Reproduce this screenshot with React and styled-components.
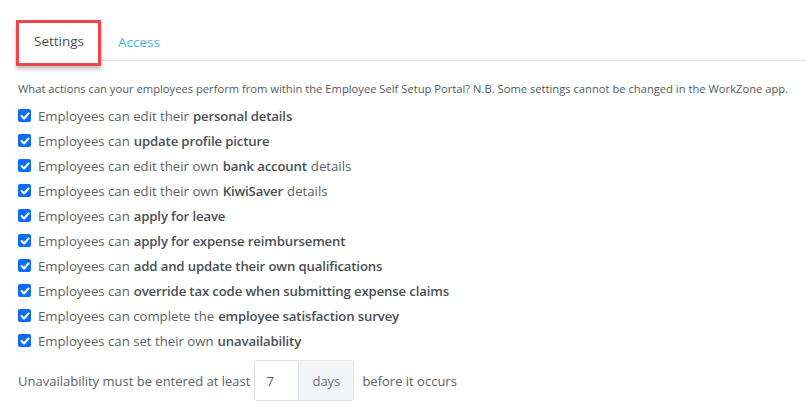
import React from "react";
import styled, { createGlobalStyle } from "styled-components";

const Global = createGlobalStyle`
  body {
    margin: 0;
    background: #ffffff;
    font-family: "Open Sans", "Liberation Sans", sans-serif;
    color: #555a60;
  }
`;

const Page = styled.div`
  padding: 22px 0 0 18px;
`;

const Tabs = styled.div`
  display: flex;
  align-items: flex-end;
  height: 38px;
  border-bottom: 1px solid #dcdcdc;
  position: relative;
`;

const Tab = styled.div`
  position: relative;
  padding: 0 ${(p) => (p.active ? "16px" : "17px")};
  height: 38px;
  display: flex;
  align-items: center;
  font-size: 13.5px;
  color: ${(p) => (p.active ? "#4a4f55" : "#3fb0e6")};
  background: ${(p) => (p.active ? "#fff" : "transparent")};
  margin-bottom: -1px;
  margin-left: ${(p) => (p.active ? "0" : "1px")};
  ${(p) => (p.active ? "border-bottom: 1px solid #fff;" : "")}
`;

const Highlight = styled.div`
  position: absolute;
  left: -2px;
  top: -2px;
  width: 79px;
  height: 40px;
  border: 3px solid #f2454b;
  box-shadow: 0 3px 4px rgba(0, 0, 0, 0.25);
  pointer-events: none;
`;

const Intro = styled.p`
  margin: 20px 0 7px;
  font-size: 11.2px;
  color: #555a60;
  white-space: nowrap;
`;

const List = styled.div`
  display: flex;
  flex-direction: column;
`;

const Row = styled.label`
  display: flex;
  align-items: center;
  height: 25px;
  font-size: 13.2px;
  color: #5c6166;
  white-space: nowrap;
`;

const Box = styled.span`
  width: 13px;
  height: 13px;
  border-radius: 2px;
  background: #0b6cf5;
  display: flex;
  align-items: center;
  justify-content: center;
  margin-right: 7px;
  flex-shrink: 0;
`;

const B = styled.b`
  font-weight: 600;
  color: #4a4f55;
  margin-left: 4px;
  letter-spacing: -0.15px;
`;

const DaysRow = styled.div`
  display: flex;
  align-items: center;
  margin-top: 7px;
  font-size: 13px;
  color: #5c6166;
`;

const Group = styled.div`
  display: flex;
  height: 39px;
  margin: 0 8px 0 4px;
  border: 1px solid #dfe2e6;
  border-radius: 3px;
  overflow: hidden;
`;

const NumInput = styled.div`
  width: 44px;
  display: flex;
  align-items: center;
  padding-left: 11px;
  box-sizing: border-box;
  background: #fff;
  color: #555a60;
  border-right: 1px solid #dfe2e6;
`;

const Addon = styled.div`
  width: 54px;
  display: flex;
  align-items: center;
  justify-content: center;
  background: #f3f5f7;
  color: #6a6f75;
`;

const Check = () => (
  <Box>
    <svg width="10" height="10" viewBox="0 0 10 10">
      <path d="M1.6 5.1 L4 7.5 L8.5 2.5" fill="none" stroke="#fff" strokeWidth="2.1" strokeLinecap="round" strokeLinejoin="round" />
    </svg>
  </Box>
);

const items = [
  ["Employees can edit their", "personal details", ""],
  ["Employees can", "update profile picture", ""],
  ["Employees can edit their own", "bank account", "details"],
  ["Employees can edit their own", "KiwiSaver", "details"],
  ["Employees can", "apply for leave", ""],
  ["Employees can", "apply for expense reimbursement", ""],
  ["Employees can", "add and update their own qualifications", ""],
  ["Employees can", "override tax code when submitting expense claims", ""],
  ["Employees can complete the", "employee satisfaction survey", ""],
  ["Employees can set their own", "unavailability", ""],
];

export default function App() {
  return (
    <Page>
      <Global />
      <Tabs>
        <Tab active>
          Settings
          <Highlight />
        </Tab>
        <Tab>Access</Tab>
      </Tabs>
      <Intro>
        What actions can your employees perform from within the Employee Self Setup Portal? N.B. Some settings cannot be changed in the WorkZone app.
      </Intro>
      <List>
        {items.map(([pre, bold, post], i) => (
          <Row key={i}>
            <Check />
            {pre}
            <B>{bold}</B>
            {post && <span style={{ marginLeft: 4 }}>{post}</span>}
          </Row>
        ))}
      </List>
      <DaysRow>
        Unavailability must be entered at least
        <Group>
          <NumInput>7</NumInput>
          <Addon>days</Addon>
        </Group>
        before it occurs
      </DaysRow>
    </Page>
  );
}
